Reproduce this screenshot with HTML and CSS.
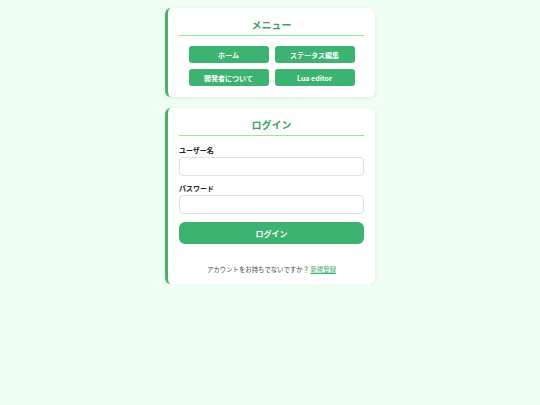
FILE: index.html
```
<!DOCTYPE html>
<html lang="ja">
<head>
<meta charset="utf-8">
<link rel="stylesheet" href="styles.css">
</head>
<body>
<main class="page">
  <section class="card menu">
    <h2 class="title">メニュー</h2>
    <div class="menu-grid">
      <a class="menu-btn">ホーム</a>
      <a class="menu-btn">ステータス編集</a>
      <a class="menu-btn">開発者について</a>
      <a class="menu-btn">Lua editor</a>
    </div>
  </section>
  <section class="card login">
    <h2 class="title">ログイン</h2>
    <form class="form">
      <label class="label">ユーザー名</label>
      <input class="input" type="text">
      <label class="label second">パスワード</label>
      <input class="input" type="password">
      <button class="submit" type="button">ログイン</button>
    </form>
    <p class="register">アカウントをお持ちでないですか？ <a class="link">新規登録</a></p>
  </section>
</main>
</body>
</html>
```
FILE: styles.css
```
* { box-sizing: border-box; }
html, body { margin: 0; padding: 0; }
body {
  background: #f0fff4;
  font-family: "Noto Sans CJK JP", "Noto Sans", sans-serif;
  color: #333;
}
.page {
  width: 210px;
  margin: 0 auto;
  padding-top: 8px;
  display: flex;
  flex-direction: column;
  gap: 11px;
}
.card {
  background: #fff;
  border-left: 3px solid #4caf6e;
  border-radius: 6px;
  box-shadow: 0 1px 4px rgba(0,0,0,0.08);
  padding: 10px 11px 11px 11px;
}
.title {
  margin: 0 0 0;
  font-size: 10px;
  line-height: 14px;
  font-weight: 700;
  color: #3a9f62;
  text-align: center;
  padding-bottom: 3px;
}
.title::after {
  content: "";
  display: block;
  height: 1px;
  margin-top: 3px;
  background: #90ee90;
}
.menu-grid {
  margin: 7px auto 0;
  width: 166px;
  display: grid;
  grid-template-columns: 80px 80px;
  gap: 6px;
}
.menu-btn {
  display: flex;
  align-items: center;
  justify-content: center;
  height: 17px;
  background: #3cb371;
  color: #fff;
  border-radius: 3px;
  font-size: 7px;
  font-weight: 700;
}
.login { padding-bottom: 9px; }
.form {
  display: flex;
  flex-direction: column;
  margin-top: 6px;
}
.label {
  font-size: 7px;
  line-height: 10px;
  font-weight: 700;
  color: #222;
  margin-bottom: 2px;
}
.label.second { margin-top: 7px; }
.input {
  height: 19px;
  border: 1px solid #e0e0e0;
  border-radius: 4px;
  background: #fff;
}
.submit {
  margin-top: 8px;
  height: 22px;
  border: none;
  border-radius: 6px;
  background: #3cb371;
  color: #fff;
  font-family: inherit;
  font-size: 8px;
  font-weight: 700;
}
.register {
  margin: 21px 0 0;
  text-align: center;
  font-size: 6.4px;
  line-height: 10px;
  color: #444;
}
.link {
  color: #3cb371;
  text-decoration: underline;
}
```
